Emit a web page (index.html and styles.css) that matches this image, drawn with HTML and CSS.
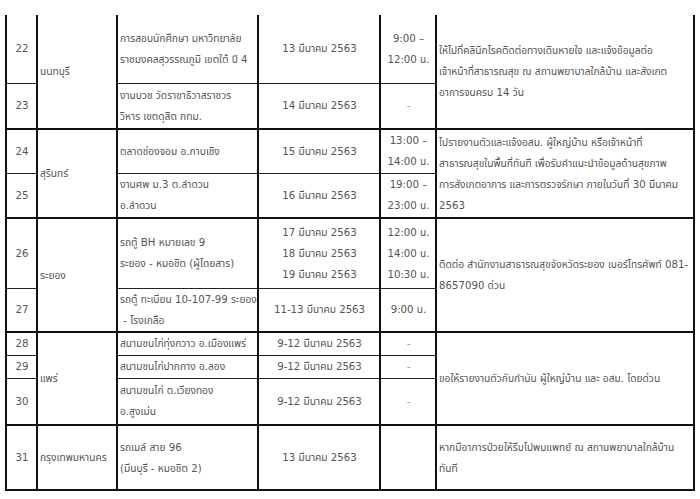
FILE: index.html
```html
<!DOCTYPE html>
<html lang="th">
<head>
<meta charset="utf-8">
<title>ตารางสถานที่เสี่ยง</title>
<link rel="stylesheet" href="styles.css">
</head>
<body>
<table class="sheet">
  <colgroup>
    <col class="c-no">
    <col class="c-prov">
    <col class="c-place">
    <col class="c-date">
    <col class="c-time">
    <col class="c-note">
  </colgroup>
  <tbody>
    <tr class="r68">
      <td class="no">22</td>
      <td class="prov end" rowspan="2">นนทบุรี</td>
      <td class="place">การสอบนักศึกษา มหาวิทยาลัย<br>ราชมงคลสุวรรณภูมิ เขตใต้ ปี 4</td>
      <td class="date">13 มีนาคม 2563</td>
      <td class="time">9:00 –<br>12:00 น.</td>
      <td class="note wide end" rowspan="2">ให้ไปที่คลินิกโรคติดต่อทางเดินหายใจ และแจ้งข้อมูลต่อ<br>เจ้าหน้าที่สาธารณสุข ณ สถานพยาบาลใกล้บ้าน และสังเกต<br>อาการจนครบ 14 วัน</td>
    </tr>
    <tr class="r46 end">
      <td class="no">23</td>
      <td class="place">งานบวช วัดราชาธิวาสราชวร<br>วิหาร เขตดุสิต กทม.</td>
      <td class="date">14 มีนาคม 2563</td>
      <td class="time dash">-</td>
    </tr>
    <tr class="r44">
      <td class="no">24</td>
      <td class="prov end" rowspan="2">สุรินทร์</td>
      <td class="place">ตลาดช่องจอม อ.กาบเชิง</td>
      <td class="date">15 มีนาคม 2563</td>
      <td class="time">13:00 –<br>14:00 น.</td>
      <td class="note end" rowspan="2">ไปรายงานตัวและแจ้งอสม. ผู้ใหญ่บ้าน หรือเจ้าหน้าที่<br>สาธารณสุขในพื้นที่ทันที เพื่อรับคำแนะนำข้อมูลด้านสุขภาพ<br>การสังเกตอาการ และการตรวจรักษา ภายในวันที่ 30 มีนาคม<br>2563</td>
    </tr>
    <tr class="r45 end">
      <td class="no">25</td>
      <td class="place">งานศพ ม.3 ต.ลำดวน<br>อ.ลำดวน</td>
      <td class="date">16 มีนาคม 2563</td>
      <td class="time">19:00 –<br>23:00 น.</td>
    </tr>
    <tr class="r70">
      <td class="no">26</td>
      <td class="prov end" rowspan="2">ระยอง</td>
      <td class="place tight">รถตู้ BH หมายเลข 9<br>ระยอง - หมอชิต (ผู้โดยสาร)</td>
      <td class="date tight">17 มีนาคม 2563<br>18 มีนาคม 2563<br>19 มีนาคม 2563</td>
      <td class="time tight">12:00 น.<br>14:00 น.<br>10:30 น.</td>
      <td class="note tight end" rowspan="2">ติดต่อ สำนักงานสาธารณสุขจังหวัดระยอง เบอร์โทรศัพท์ 081-<br>8657090 ด่วน</td>
    </tr>
    <tr class="r44 end">
      <td class="no">27</td>
      <td class="place">รถตู้ ทะเบียน 10-107-99 ระยอง<br>&nbsp;- โรงเกลือ</td>
      <td class="date">11-13 มีนาคม 2563</td>
      <td class="time">9:00 น.</td>
    </tr>
    <tr class="r23">
      <td class="no">28</td>
      <td class="prov end" rowspan="3">แพร่</td>
      <td class="place">สนามชนไก่ทุ่งกวาว อ.เมืองแพร่</td>
      <td class="date">9-12 มีนาคม 2563</td>
      <td class="time dash">-</td>
      <td class="note end" rowspan="3">ขอให้รายงานตัวกับกำนัน ผู้ใหญ่บ้าน และ อสม. โดยด่วน</td>
    </tr>
    <tr class="r23">
      <td class="no">29</td>
      <td class="place">สนามชนไก่ปากกาง อ.ลอง</td>
      <td class="date">9-12 มีนาคม 2563</td>
      <td class="time dash">-</td>
    </tr>
    <tr class="r47 end">
      <td class="no">30</td>
      <td class="place">สนามชนไก่ ต.เวียงทอง<br>อ.สูงเม่น</td>
      <td class="date">9-12 มีนาคม 2563</td>
      <td class="time dash">-</td>
    </tr>
    <tr class="r65 end">
      <td class="no">31</td>
      <td class="prov">กรุงเทพมหานคร</td>
      <td class="place">รถเมล์ สาย 96<br>(มีนบุรี - หมอชิต 2)</td>
      <td class="date">13 มีนาคม 2563</td>
      <td class="time"></td>
      <td class="note wide">หากมีอาการป่วยให้รีบไปพบแพทย์ ณ สถานพยาบาลใกล้บ้าน<br>ทันที</td>
    </tr>
  </tbody>
</table>
</body>
</html>
```

FILE: styles.css
```css
html, body {
  margin: 0;
  padding: 0;
  background: #fff;
}

body {
  padding: 15px 0 0 5px;
  font-family: "DejaVu Sans", "Noto Sans Thai", Tahoma, sans-serif;
  font-size: 10.2px;
  color: #555;
}

.sheet {
  border-collapse: collapse;
  table-layout: fixed;
  width: 690px;
}

.c-no { width: 31px; }
.c-prov { width: 80px; }
.c-place { width: 141px; }
.c-date { width: 122px; }
.c-time { width: 56px; }
.c-note { width: 258px; }

.sheet td {
  border-left: 2px solid #111;
  border-right: 2px solid #111;
  border-top: 0;
  border-bottom: 1px solid #222;
  padding: 0 1px 0 2px;
  vertical-align: middle;
  white-space: nowrap;
  overflow: hidden;
  line-height: 21px;
}

.sheet tr.end td,
.sheet td.end {
  border-bottom: 2px solid #111;
}

.r68 { height: 68px; }
.r46 { height: 46px; }
.r44 { height: 44px; }
.r45 { height: 45px; }
.r70 { height: 70px; }
.r47 { height: 47px; }
.r23 { height: 23px; }
.r65 { height: 65px; }

.no { text-align: center; }
.prov { text-align: left; padding-left: 1px; }
.place { text-align: left; }
.date { text-align: center; }
.time { text-align: center; }
.note { text-align: left; }

.wide { line-height: 22.5px; }
.tight { line-height: 18.5px; }

.dash { color: #9a9a9a; }
```
